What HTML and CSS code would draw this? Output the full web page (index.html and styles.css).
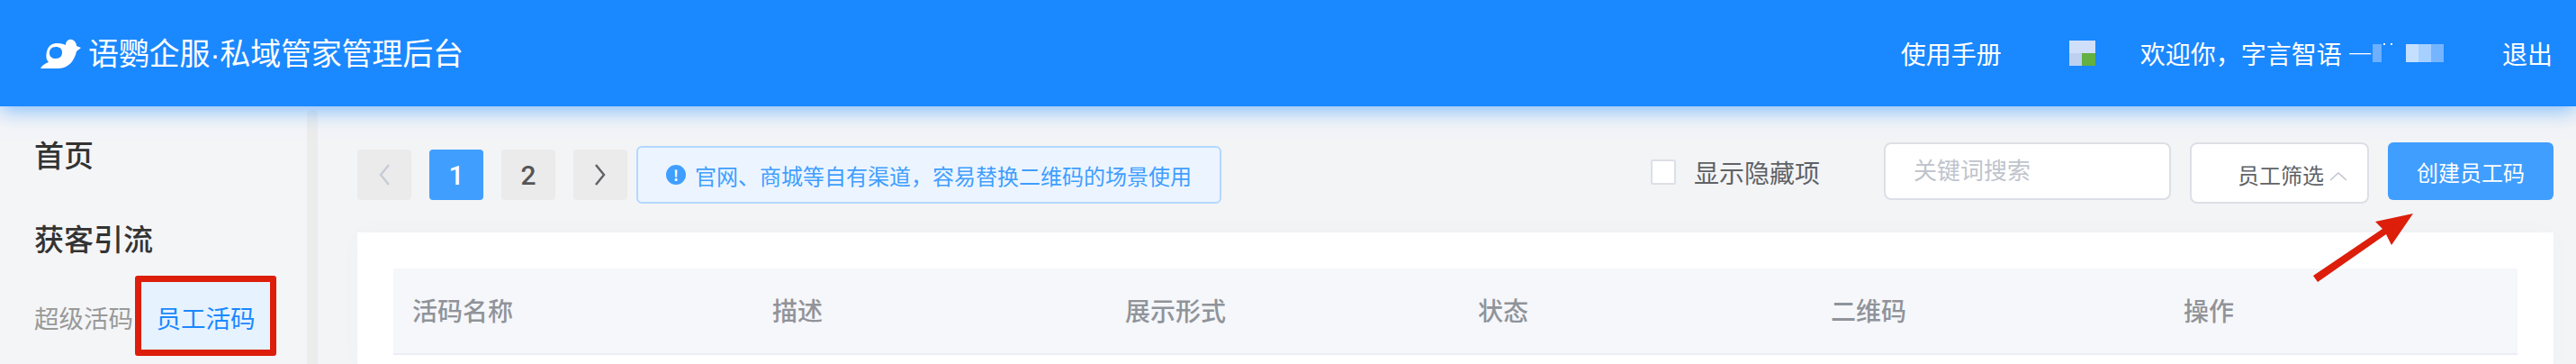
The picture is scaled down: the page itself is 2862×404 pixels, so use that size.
FILE: index.html
```html
<!DOCTYPE html>
<html lang="zh-CN">
<head>
    <meta charset="UTF-8">
    <title>语鹦企服·私域管家管理后台</title>
    <link rel="stylesheet" href="styles.css">
</head>
<body>
    <header class="topbar">
        <div class="brand">
            <svg class="brand-logo" viewBox="0 0 46 36" width="46" height="36">
                <path fill="#fff" fill-rule="evenodd" d="M0 34C1 31 4 29 9 27C6 24 6 20 7 15C9 8 13 6 19 6C23 6 26 7 28 8C28 4 31 1 35 2C38 3 40 6 40 9L45 11L40 15C38 24 32 34 20 34ZM17 10C12 10 10 13 10 17C10 21 13 23 17 23C22 23 24 20 24 16C24 12 21 10 17 10Z"/>
            </svg>
            <span class="brand-name">语鹦企服<span class="dot">·</span>私域管家管理后台</span>
        </div>
        <div class="user-area">
            <a class="manual">使用手册</a>
            <div class="avatar"><i></i><i></i><i></i></div>
            <span class="welcome">欢迎你，字言智语 —</span>
            <div class="blurred">
                <i class="b1"></i>
                <i class="gap"></i>
                <i class="b2"></i><i class="b3"></i><i class="b4"></i>
            </div>
            <a class="logout">退出</a>
        </div>
    </header>

    <div class="layout">
        <aside class="sidebar">
            <div class="menu-top">首页</div>
            <div class="menu-top">获客引流</div>
            <div class="menu-sub">
                <span class="sub-item">超级活码</span>
                <span class="sub-item active">员工活码</span>
            </div>
        </aside>
        <div class="scrollbar"></div>

        <main class="main">
            <div class="toolbar">
                <div class="toolbar-left">
                    <div class="pager">
                        <span class="page-btn disabled">
                            <svg width="14" height="26" viewBox="0 0 14 26"><path d="M12 2L3 13L12 24" fill="none" stroke="#c8ccd4" stroke-width="2.5"/></svg>
                        </span>
                        <span class="page-btn current">1</span>
                        <span class="page-btn">2</span>
                        <span class="page-btn">
                            <svg width="14" height="26" viewBox="0 0 14 26"><path d="M2 2L11 13L2 24" fill="none" stroke="#606266" stroke-width="2.5"/></svg>
                        </span>
                    </div>
                    <div class="notice">
                        <span class="notice-icon">!</span>
                        <span>官网、商城等自有渠道，容易替换二维码的场景使用</span>
                    </div>
                </div>
                <div class="toolbar-right">
                    <label class="check-wrap">
                        <span class="checkbox"></span>
                        <span>显示隐藏项</span>
                    </label>
                    <div class="search">关键词搜索</div>
                    <div class="staff-filter">
                        <span>员工筛选</span>
                        <svg width="20" height="10" viewBox="0 0 20 10"><path d="M1 9L10 1L19 9" fill="none" stroke="#c0c4cc" stroke-width="1.5"/></svg>
                    </div>
                    <button class="create-btn">创建员工码</button>
                </div>
            </div>

            <section class="card">
                <div class="table-head">
                    <span>活码名称</span>
                    <span>描述</span>
                    <span>展示形式</span>
                    <span>状态</span>
                    <span>二维码</span>
                    <span>操作</span>
                </div>
            </section>

            <svg class="arrow" width="112" height="76" viewBox="0 0 112 76">
                <path fill="#dc1e0a" d="M111 0L69 9L77 17L0 69L5 76L81 23L87 35Z"/>
            </svg>
        </main>
    </div>
</body>
</html>
```

FILE: styles.css
```css
* {
    box-sizing: border-box;
}

html, body {
    margin: 0;
    padding: 0;
    height: 404px;
    overflow: hidden;
}

body {
    font-family: "Noto Sans CJK SC", "Noto Sans", sans-serif;
    background: #f3f4f6;
    color: #333;
    display: flex;
    flex-direction: column;
}

/* Top bar */
.topbar {
    flex: none;
    height: 118px;
    background: #1a88ff;
    color: #fff;
    display: flex;
    align-items: center;
    justify-content: space-between;
    padding: 0 26px 0 45px;
    box-shadow: 0 4px 22px rgba(26, 136, 255, 0.55);
    position: relative;
    z-index: 2;
}

.brand {
    display: flex;
    align-items: center;
    gap: 7px;
    margin-top: -1px;
}

.brand-logo {
    margin-top: 2px;
}

.brand-name {
    font-size: 34px;
    line-height: 40px;
    letter-spacing: -0.2px;
    white-space: nowrap;
}

.dot {
    font-family: "Liberation Sans", sans-serif;
}

.user-area {
    display: flex;
    align-items: center;
    font-size: 28px;
    line-height: 40px;
    white-space: nowrap;
}

.manual {
    margin-right: 75px;
}

.avatar {
    width: 29px;
    height: 28px;
    margin-right: 50px;
    display: grid;
    grid-template-columns: 1fr 1fr;
    grid-template-rows: 1fr 1fr;
}

.avatar i:first-child {
    grid-column: 1 / 3;
    background: #cfdff9;
}

.avatar i:nth-child(2) {
    background: #bdd0f0;
}

.avatar i:nth-child(3) {
    background: #63b043;
}

.blurred {
    display: flex;
    align-items: flex-start;
    height: 20px;
    margin-right: 65px;
}

.blurred i {
    display: block;
    height: 20px;
    width: 14px;
}

.blurred .b1 {
    width: 10px;
    background: #6cb0ff;
}

.blurred .gap {
    width: 27px;
    background: none;
    margin-top: -1px;
}

.blurred .gap::before {
    content: "";
    display: block;
    width: 2px;
    height: 2px;
    margin-left: 2px;
    background: #fff;
    box-shadow: 8px 0 #fff;
}

.blurred .b2 {
    background: #c5e0ff;
}

.blurred .b3 {
    background: #a5d0ff;
}

.blurred .b4 {
    background: #75b5ff;
}

/* Body area */
.layout {
    flex: 1;
    display: flex;
    min-height: 0;
}

.sidebar {
    width: 341px;
    flex: none;
    background: #f4f5f7;
    padding: 29px 0 0 38px;
}

.menu-top {
    font-size: 33px;
    line-height: 48px;
    font-weight: 500;
    color: #333;
    margin-bottom: 45px;
}

.menu-sub {
    display: flex;
    align-items: center;
    margin-top: -27px;
    font-size: 27.5px;
    color: #999;
}

.sub-item {
    white-space: nowrap;
    padding-top: 3px;
}

.sub-item.active {
    color: #1a88ff;
    background: #e6f3ff;
    border: 7px solid #dc1e0a;
    border-radius: 3px;
    width: 157px;
    height: 89px;
    margin-left: 2px;
    display: flex;
    align-items: center;
    justify-content: center;
}

.scrollbar {
    width: 12px;
    flex: none;
    margin-top: 4px;
    background: #ececec;
    border-radius: 6px 6px 0 0;
}

.main {
    flex: 1;
    position: relative;
    padding: 40px 25px 0 44px;
    min-width: 0;
}

/* Toolbar */
.toolbar {
    display: flex;
    justify-content: space-between;
    align-items: flex-start;
    height: 68px;
}

.toolbar-left,
.toolbar-right {
    display: flex;
    align-items: flex-start;
}

.pager {
    display: flex;
    gap: 20px;
    margin-top: 8px;
}

.page-btn {
    width: 60px;
    height: 56px;
    border-radius: 4px;
    background: #ebebeb;
    color: #555;
    font-family: Roboto, sans-serif;
    font-size: 30px;
    font-weight: 500;
    display: flex;
    align-items: center;
    justify-content: center;
}

.page-btn.current {
    background: #409eff;
    color: #fff;
}

.notice {
    margin: 4px 0 0 10px;
    width: 650px;
    height: 64px;
    padding: 0 0 0 31px;
    border: 2px solid #b3d8ff;
    border-radius: 6px;
    background: #ecf5ff;
    color: #409eff;
    font-size: 24px;
    display: flex;
    align-items: center;
    gap: 10px;
    white-space: nowrap;
}

.notice-icon {
    width: 22px;
    height: 22px;
    border-radius: 50%;
    background: #409eff;
    color: #fff;
    font-size: 16px;
    font-weight: 700;
    line-height: 22px;
    text-align: center;
}

.check-wrap {
    display: flex;
    align-items: center;
    gap: 20px;
    height: 56px;
    margin: 5px 71px 0 0;
    font-size: 28px;
    color: #606266;
    white-space: nowrap;
}

.checkbox {
    width: 28px;
    height: 28px;
    background: #fff;
    border: 2px solid #dcdfe6;
    border-radius: 2px;
}

.search {
    width: 319px;
    height: 64px;
    margin-right: 21px;
    padding-left: 31px;
    background: #fff;
    border: 2px solid #dcdfe6;
    border-radius: 8px;
    color: #c0c4cc;
    font-size: 26px;
    line-height: 56px;
}

.staff-filter {
    width: 199px;
    height: 68px;
    margin-right: 21px;
    padding: 2px 0 0 51px;
    background: #fff;
    border: 2px solid #dcdfe6;
    border-radius: 8px;
    color: #606266;
    font-size: 24px;
    display: flex;
    align-items: center;
    gap: 6px;
    white-space: nowrap;
}

.staff-filter svg {
    margin-top: 6px;
}

.create-btn {
    width: 184px;
    height: 64px;
    border: none;
    border-radius: 6px;
    background: #409eff;
    color: #fff;
    font-family: inherit;
    font-size: 24px;
    padding: 0;
}

/* Table card */
.card {
    margin-top: 32px;
    height: 146px;
    padding: 40px 40px 0;
    background: #fff;
    box-shadow: 0 0 30px rgba(0, 0, 0, 0.02);
}

.table-head {
    height: 96px;
    padding: 0 0 2px 21px;
    background: #f5f7fa;
    border-bottom: 2px solid #ebeef5;
    color: #909399;
    font-size: 28px;
    font-weight: 500;
    display: grid;
    grid-template-columns: 400px repeat(5, 392px);
    align-items: center;
}

/* Annotation arrow pointing at the create button */
.arrow {
    position: absolute;
    left: 2217px;
    top: 119px;
}
```
